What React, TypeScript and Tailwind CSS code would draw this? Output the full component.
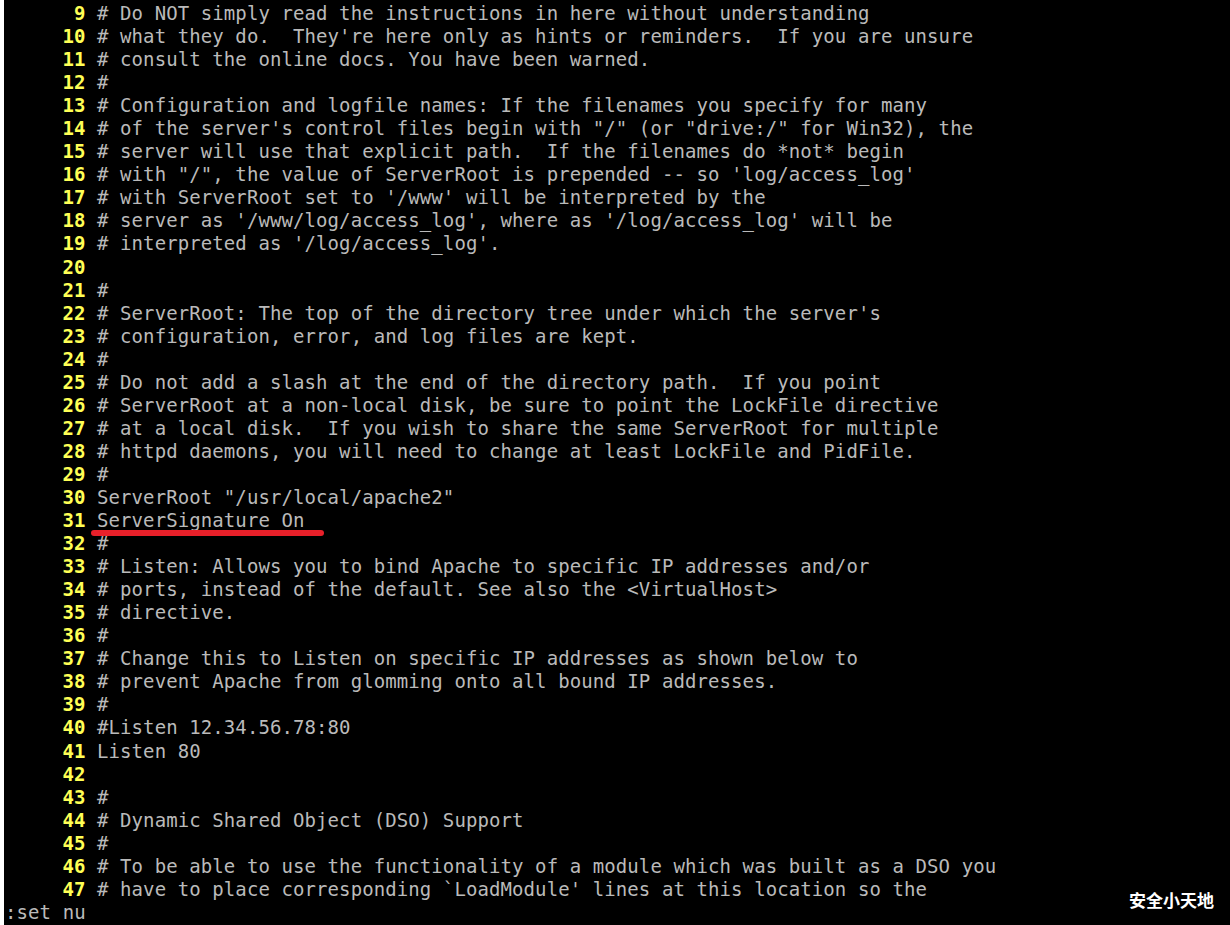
const lines: [string, string][] = [
  ["9", "# Do NOT simply read the instructions in here without understanding"],
  ["10", "# what they do.  They're here only as hints or reminders.  If you are unsure"],
  ["11", "# consult the online docs. You have been warned."],
  ["12", "#"],
  ["13", "# Configuration and logfile names: If the filenames you specify for many"],
  ["14", "# of the server's control files begin with \"/\" (or \"drive:/\" for Win32), the"],
  ["15", "# server will use that explicit path.  If the filenames do *not* begin"],
  ["16", "# with \"/\", the value of ServerRoot is prepended -- so 'log/access_log'"],
  ["17", "# with ServerRoot set to '/www' will be interpreted by the"],
  ["18", "# server as '/www/log/access_log', where as '/log/access_log' will be"],
  ["19", "# interpreted as '/log/access_log'."],
  ["20", ""],
  ["21", "#"],
  ["22", "# ServerRoot: The top of the directory tree under which the server's"],
  ["23", "# configuration, error, and log files are kept."],
  ["24", "#"],
  ["25", "# Do not add a slash at the end of the directory path.  If you point"],
  ["26", "# ServerRoot at a non-local disk, be sure to point the LockFile directive"],
  ["27", "# at a local disk.  If you wish to share the same ServerRoot for multiple"],
  ["28", "# httpd daemons, you will need to change at least LockFile and PidFile."],
  ["29", "#"],
  ["30", "ServerRoot \"/usr/local/apache2\""],
  ["31", "ServerSignature On"],
  ["32", "#"],
  ["33", "# Listen: Allows you to bind Apache to specific IP addresses and/or"],
  ["34", "# ports, instead of the default. See also the <VirtualHost>"],
  ["35", "# directive."],
  ["36", "#"],
  ["37", "# Change this to Listen on specific IP addresses as shown below to"],
  ["38", "# prevent Apache from glomming onto all bound IP addresses."],
  ["39", "#"],
  ["40", "#Listen 12.34.56.78:80"],
  ["41", "Listen 80"],
  ["42", ""],
  ["43", "#"],
  ["44", "# Dynamic Shared Object (DSO) Support"],
  ["45", "#"],
  ["46", "# To be able to use the functionality of a module which was built as a DSO you"],
  ["47", "# have to place corresponding `LoadModule' lines at this location so the"],
];

export default function App() {
  return (
    <div className="relative h-[925px] w-[1230px] overflow-hidden border-l-4 border-white bg-black">
      <div className="pl-[1px] pt-[2px] font-['DejaVu_Sans_Mono',monospace] text-[19px] leading-[23.05px] tracking-[0.09px] whitespace-pre text-[#bababa]">
        {lines.map(([num, text]) => (
          <div key={num} className="flex h-[23.05px]">
            <span className="w-[92px] pr-[11.5px] text-right font-bold text-[#ffff55]">{num}</span>
            <span>{text}</span>
          </div>
        ))}
        <div className="h-[23.05px]">:set nu</div>
      </div>

      {/* red annotation under line 31 */}
      <div className="absolute left-[87px] top-[530px] h-[6px] w-[233px] rounded-full bg-[#e8202a]" />

      {/* watermark */}
      <div className="absolute left-[1125px] top-[891px] font-['Noto_Sans_CJK_SC',sans-serif] text-[17px] font-bold leading-none text-white">
        安全小天地
      </div>
    </div>
  );
}
